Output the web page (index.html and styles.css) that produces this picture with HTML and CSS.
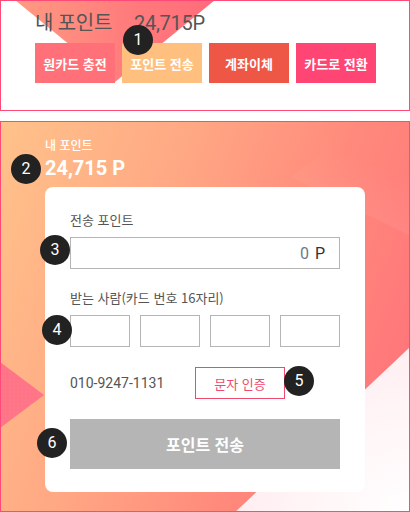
FILE: index.html
```html
<!DOCTYPE html>
<html lang="ko">
<head>
<meta charset="utf-8">
<link rel="stylesheet" href="styles.css">
</head>
<body>
<section class="top">
  <div class="top-tri"></div>
  <div class="top-title"><span>내 포인트</span><span class="top-num">24,715P</span></div>
  <div class="top-btns">
    <span class="tbtn b1">원카드 충전</span>
    <span class="tbtn b2">포인트 전송</span>
    <span class="tbtn b3">계좌이체</span>
    <span class="tbtn b4">카드로 전환</span>
  </div>
  <span class="badge bd1">1</span>
</section>

<section class="panel">
  <div class="deco-tr"></div>
  <div class="deco-br"></div>
  <div class="deco-l"></div>
  <div class="p-label">내 포인트</div>
  <div class="p-num">24,715 P</div>
  <div class="card">
    <div class="label">전송 포인트</div>
    <div class="input big"><span class="zero">0</span><span class="unit">P</span></div>
    <div class="label l2">받는 사람(카드 번호 16자리)</div>
    <div class="cards">
      <div class="input sm"></div>
      <div class="input sm"></div>
      <div class="input sm"></div>
      <div class="input sm"></div>
    </div>
    <div class="phone-row">
      <span class="phone">010-9247-1131</span>
      <span class="sms">문자 인증</span>
    </div>
    <div class="send">포인트 전송</div>
  </div>
  <span class="badge bd2">2</span>
  <span class="badge bd3">3</span>
  <span class="badge bd4">4</span>
  <span class="badge bd5">5</span>
  <span class="badge bd6">6</span>
</section>
</body>
</html>
```

FILE: styles.css
```css
* { box-sizing: border-box; }
html, body { margin: 0; padding: 0; background: #fff; }
body {
  width: 410px;
  height: 512px;
  overflow: hidden;
  font-family: "Roboto", "Noto Sans CJK KR", sans-serif;
}
.top {
  position: relative;
  height: 111px;
  border: 1px solid #ff4a78;
  padding: 8px 0 0 34px;
  overflow: hidden;
}
.top-tri {
  position: absolute;
  left: 14px;
  top: -1px;
  width: 200px;
  height: 82px;
  background: linear-gradient(90deg, #ff9a82 0%, #ff7a7c 60%, #ff6c7a 100%);
  clip-path: polygon(0 0, 100% 0, 50% 100%);
}
.top-title {
  position: relative;
  display: flex;
  gap: 22px;
  font-size: 20px;
  line-height: 28px;
  color: #555;
  letter-spacing: -0.3px;
}
.top-btns {
  position: relative;
  display: flex;
  gap: 7px;
  margin-top: 6px;
}
.tbtn {
  width: 80px;
  height: 40px;
  display: flex;
  align-items: center;
  justify-content: center;
  color: #fff;
  font-weight: 700;
  font-size: 13px;
  font-family: "Noto Sans CJK KR", sans-serif;
}
.b1 { background: #ff7078; }
.b2 { background: #ffbf7e; }
.b3 { background: #ee5646; }
.b4 { background: #ff4573; }

.badge {
  position: absolute;
  width: 30px;
  height: 30px;
  border-radius: 50%;
  background: #222;
  color: #fff;
  font-size: 16px;
  line-height: 30px;
  text-align: center;
  font-family: "Roboto", sans-serif;
}
.bd1 { left: 122px; top: 24px; }

.panel {
  position: relative;
  margin-top: 10px;
  height: 391px;
  border: 1px solid #ff4a78;
  padding: 15px 0 0 44px;
  overflow: hidden;
  background: linear-gradient(110deg, #ffc28a 0%, #ffa884 35%, #ff8a7c 65%, #ff6e7a 100%);
}
.deco-tr {
  position: absolute;
  left: 220px;
  top: -1px;
  width: 200px;
  height: 120px;
  background: linear-gradient(200deg, rgba(255,255,255,0) 30%, rgba(255,255,255,0.08) 70%);
  clip-path: polygon(145px 0, 100% 0, 100% 100%, 70px 56px);
}
.deco-br {
  position: absolute;
  left: 230px;
  top: 224px;
  width: 180px;
  height: 170px;
  background: radial-gradient(circle at 100% 100%, #ffffff 0%, #fff3f5 50%, #ffe6ea 100%);
  clip-path: polygon(100% 0, 100% 100%, 0 100%);
}
.deco-l {
  position: absolute;
  left: -1px;
  top: 240px;
  width: 44px;
  height: 66px;
  background-color: #ff7585;
  background-image: radial-gradient(circle, rgba(255,120,160,0.9) 0.6px, transparent 0.8px);
  background-size: 4px 4px;
  clip-path: polygon(0 0, 100% 50%, 0 100%);
}
.p-label {
  position: relative;
  color: #fff;
  font-size: 12px;
  line-height: 16px;
  font-weight: 500;
  font-family: "Noto Sans CJK KR", sans-serif;
}
.p-num {
  position: relative;
  color: #fff;
  font-size: 20px;
  font-weight: 700;
  line-height: 22px;
  margin-top: 4px;
}
.card {
  position: relative;
  margin-top: 8px;
  width: 320px;
  height: 305px;
  background: #fff;
  border-radius: 8px;
  padding: 24px 25px 0 25px;
}
.label {
  font-size: 13px;
  line-height: 18px;
  color: #555;
  font-family: "Noto Sans CJK KR", sans-serif;
}
.input {
  border: 1px solid #b5b5b5;
  height: 32px;
  background: #fff;
}
.big {
  margin-top: 8px;
  width: 270px;
  display: flex;
  align-items: center;
  justify-content: flex-end;
  gap: 6px;
  padding-right: 14px;
  font-size: 16px;
}
.zero { color: #6b7a8a; }
.unit { color: #333; }
.l2 { margin-top: 20px; }
.cards {
  margin-top: 8px;
  display: flex;
  gap: 10px;
}
.sm { width: 60px; }
.phone-row {
  margin-top: 20px;
  display: flex;
  align-items: center;
  height: 32px;
}
.phone {
  width: 125px;
  font-size: 14px;
  color: #555;
}
.sms {
  width: 90px;
  height: 32px;
  border: 1px solid #ef4b6e;
  color: #ef4b6e;
  font-size: 13px;
  display: flex;
  align-items: center;
  justify-content: center;
  font-family: "Noto Sans CJK KR", sans-serif;
}
.send {
  margin-top: 20px;
  width: 270px;
  height: 50px;
  background: #b5b5b5;
  color: #fff;
  font-size: 16px;
  font-weight: 700;
  display: flex;
  align-items: center;
  justify-content: center;
  font-family: "Noto Sans CJK KR", sans-serif;
}
.bd2 { left: 10px; top: 32px; }
.bd3 { left: 39px; top: 113px; }
.bd4 { left: 41px; top: 193px; }
.bd5 { left: 283px; top: 244px; }
.bd6 { left: 36px; top: 306px; }
```
